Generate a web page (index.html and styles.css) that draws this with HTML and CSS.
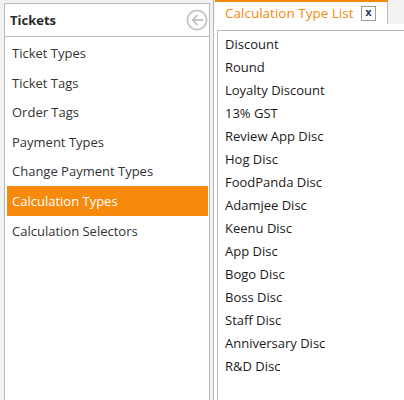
FILE: index.html
```html
<!DOCTYPE html>
<html>
<head>
<meta charset="utf-8">
<link rel="stylesheet" href="styles.css">
</head>
<body>
<div class="app">
  <div class="side">
    <div class="side-head">
      <span class="side-title">Tickets</span>
      <svg class="back" width="22" height="22" viewBox="0 0 22 22">
        <circle cx="11" cy="11" r="9.6" fill="none" stroke="#c4c4c4" stroke-width="1.8"/>
        <path d="M16.5 11H6.5M11 6.5L6.5 11L11 15.5" fill="none" stroke="#c4c4c4" stroke-width="1.8" stroke-linecap="round" stroke-linejoin="round"/>
      </svg>
    </div>
    <ul class="nav">
      <li>Ticket Types</li>
      <li>Ticket Tags</li>
      <li>Order Tags</li>
      <li>Payment Types</li>
      <li>Change Payment Types</li>
      <li class="active">Calculation Types</li>
      <li>Calculation Selectors</li>
    </ul>
  </div>
  <div class="main">
    <div class="tabs">
      <div class="tab">
        <span class="tab-title">Calculation Type List</span>
        <span class="close">x</span>
      </div>
    </div>
    <div class="panel">
      <ul class="list">
        <li>Discount</li>
        <li>Round</li>
        <li>Loyalty Discount</li>
        <li>13% GST</li>
        <li>Review App Disc</li>
        <li>Hog Disc</li>
        <li>FoodPanda Disc</li>
        <li>Adamjee Disc</li>
        <li>Keenu Disc</li>
        <li>App Disc</li>
        <li>Bogo Disc</li>
        <li>Boss Disc</li>
        <li>Staff Disc</li>
        <li>Anniversary Disc</li>
        <li>R&amp;D Disc</li>
      </ul>
    </div>
  </div>
</div>
</body>
</html>
```

FILE: styles.css
```css
html, body {
  margin: 0;
  padding: 0;
}
body {
  background: #f2f2f2;
  font-family: "Open Sans", "Noto Sans", sans-serif;
  font-size: 13px;
  color: #262626;
  overflow: hidden;
}
.app {
  display: flex;
  height: 400px;
  align-items: flex-start;
}
.side {
  margin: 3px 0 0 4px;
  width: 204px;
  height: 397px;
  background: #fff;
  border: 1px solid #b9b9b9;
  border-bottom: none;
  flex: none;
}
.side-head {
  height: 32px;
  border-bottom: 1px solid #b9b9b9;
  display: flex;
  align-items: center;
  justify-content: space-between;
  padding: 0 1px 0 5px;
}
.side-title {
  font-weight: 700;
  color: #2a2a2a;
}
.back {
  display: block;
  margin-top: -1px;
}
.nav {
  list-style: none;
  margin: 0;
  padding: 1px 1px 0 2px;
}
.nav li {
  height: 29.6px;
  line-height: 31px;
  padding-left: 5px;
  color: #333;
  white-space: nowrap;
}
.nav li.active {
  background: #f7890c;
  color: #fff;
}
.main {
  margin-left: 3px;
  flex: 1;
  height: 400px;
  display: flex;
  flex-direction: column;
  border-left: 1px solid #b9b9b9;
}
.tabs {
  height: 24px;
  display: flex;
  flex: none;
}
.tab {
  margin-left: 1px;
  border-top: 2px solid #f7890c;
  border-right: 1px solid #b9b9b9;
  background: #fff;
  display: flex;
  align-items: center;
  padding-left: 10px;
  box-sizing: border-box;
  width: 173px;
}
.tab-title {
  color: #f7890c;
  font-size: 13.5px;
  white-space: nowrap;
}
.close {
  margin-left: auto;
  margin-right: 11px;
  width: 13px;
  height: 13px;
  border: 1px solid #9a9a9a;
  font-size: 10px;
  font-weight: 700;
  font-family: "DejaVu Sans", sans-serif;
  line-height: 12px;
  text-align: center;
  color: #2b3a5a;
  margin-top: 1px;
}
.panel {
  flex: 1;
  background: #fff;
  padding: 6px 0 0 3px;
}
.list {
  list-style: none;
  margin: 0;
  height: 100%;
  border-top: 1px solid #b9b9b9;
  border-left: 1px solid #b9b9b9;
  padding: 2px 0 0 7px;
  box-sizing: border-box;
}
.list li {
  height: 23px;
  line-height: 23px;
  color: #1a1a1a;
  white-space: nowrap;
}
```
